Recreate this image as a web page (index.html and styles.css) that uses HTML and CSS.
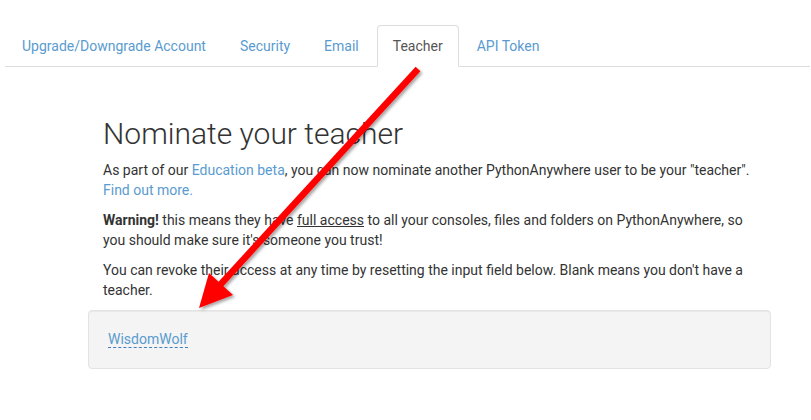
FILE: index.html
```html
<!DOCTYPE html>
<html>
<head>
<meta charset="utf-8">
<link rel="stylesheet" href="styles.css">
</head>
<body>
<ul class="tabs">
  <li class="tab"><a href="#">Upgrade/Downgrade Account</a></li>
  <li class="tab"><a href="#">Security</a></li>
  <li class="tab"><a href="#">Email</a></li>
  <li class="tab active"><a href="#">Teacher</a></li>
  <li class="tab"><a href="#">API Token</a></li>
</ul>
<main class="content">
  <div class="text">
    <h1 class="title">Nominate your teacher</h1>
    <p>As part of our <a href="#">Education beta</a>, you can now nominate another PythonAnywhere user to be your "teacher". <a href="#">Find out more.</a></p>
    <p><strong>Warning!</strong> this means they have <u>full access</u> to all your consoles, files and folders on PythonAnywhere, so you should make sure it's someone you trust!</p>
    <p>You can revoke their access at any time by resetting the input field below. Blank means you don't have a teacher.</p>
  </div>
  <div class="well"><a class="editable" href="#">WisdomWolf</a></div>
</main>
<svg class="arrow" width="811" height="420" viewBox="0 0 811 420">
  <defs>
    <filter id="sh" x="-20%" y="-20%" width="140%" height="140%">
      <feDropShadow dx="2" dy="2" stdDeviation="1.5" flood-color="#000" flood-opacity="0.35"/>
    </filter>
  </defs>
  <g filter="url(#sh)" fill="#ff0000" stroke="none">
    <line x1="418" y1="69" x2="220" y2="285" stroke="#ff0000" stroke-width="6.5" stroke-linecap="butt"/>
    <polygon points="199,308 209,273 233,295"/>
  </g>
</svg>
</body>
</html>
```
FILE: styles.css
```css
html, body {
  margin: 0;
  padding: 0;
  background: #fff;
}
body {
  font-family: Roboto, "Liberation Sans", sans-serif;
  font-size: 14px;
  line-height: 20px;
  color: #333;
  width: 811px;
  height: 420px;
  overflow: hidden;
  position: relative;
}
a {
  color: #5a9bcf;
  text-decoration: none;
}
.tabs {
  list-style: none;
  margin: 25px 1px 0 5px;
  padding: 0 0 0 1px;
  display: flex;
  border-bottom: 1px solid #ddd;
}
.tab {
  margin-right: 2px;
  margin-bottom: -1px;
}
.tab a {
  display: block;
  padding: 10px 15px;
  line-height: 20px;
  border: 1px solid transparent;
  border-radius: 4px 4px 0 0;
}
.tab.active a {
  color: #555;
  background: #fff;
  border-color: #ddd #ddd transparent;
}
.content {
  margin: 0 0 0 88px;
  width: 683px;
}
.text {
  padding: 0 15px;
}
.title {
  font-size: 30px;
  font-weight: 300;
  line-height: 33px;
  margin: 50px 0 10px;
  color: #333;
}
p {
  margin: 0 0 10px;
}
strong {
  font-weight: 700;
}
.well {
  background: #f4f4f4;
  border: 1px solid #e3e3e3;
  border-radius: 4px;
  box-shadow: inset 0 1px 1px rgba(0,0,0,0.05);
  padding: 18px 19px 19px;
}
.editable {
  font-size: 14px;
  line-height: 20px;
  border-bottom: 1px dashed #3b7fc0;
}
.arrow {
  position: absolute;
  left: 0;
  top: 0;
  pointer-events: none;
}
```
